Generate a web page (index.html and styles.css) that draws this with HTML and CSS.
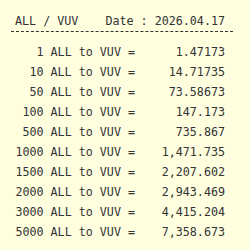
FILE: index.html
```html
<!DOCTYPE html>
<html>
<head>
<meta charset="utf-8">
<link rel="stylesheet" href="styles.css">
</head>
<body>
<div class="box">
  <div class="head"><span>ALL / VUV</span><span>Date : 2026.04.17</span></div>
  <div class="rows">
    <div class="row"><span class="lbl">1 ALL to VUV =</span><span class="val">1.47173</span></div>
    <div class="row"><span class="lbl">10 ALL to VUV =</span><span class="val">14.71735</span></div>
    <div class="row"><span class="lbl">50 ALL to VUV =</span><span class="val">73.58673</span></div>
    <div class="row"><span class="lbl">100 ALL to VUV =</span><span class="val">147.173</span></div>
    <div class="row"><span class="lbl">500 ALL to VUV =</span><span class="val">735.867</span></div>
    <div class="row"><span class="lbl">1000 ALL to VUV =</span><span class="val">1,471.735</span></div>
    <div class="row"><span class="lbl">1500 ALL to VUV =</span><span class="val">2,207.602</span></div>
    <div class="row"><span class="lbl">2000 ALL to VUV =</span><span class="val">2,943.469</span></div>
    <div class="row"><span class="lbl">3000 ALL to VUV =</span><span class="val">4,415.204</span></div>
    <div class="row"><span class="lbl">5000 ALL to VUV =</span><span class="val">7,358.673</span></div>
  </div>
</div>
</body>
</html>
```
FILE: styles.css
```css
html, body {
  margin: 0;
  background: #ffffe0;
}
body {
  font-family: "DejaVu Sans Mono", monospace;
  font-size: 11.7px;
  line-height: 20px;
  color: #333;
  white-space: nowrap;
}
.box {
  margin: 11px 0 0 11px;
  width: 222px;
}
.head {
  display: flex;
  justify-content: space-between;
  padding: 0 8px 0 4px;
  border-bottom: 1px dashed #333;
}
.rows {
  margin-top: 10px;
  padding: 0 8px 0 4px;
}
.row {
  display: flex;
}
.lbl {
  flex: 0 0 auto;
  width: 120px;
  text-align: right;
}
.val {
  flex: 1 1 auto;
  text-align: right;
}
```
